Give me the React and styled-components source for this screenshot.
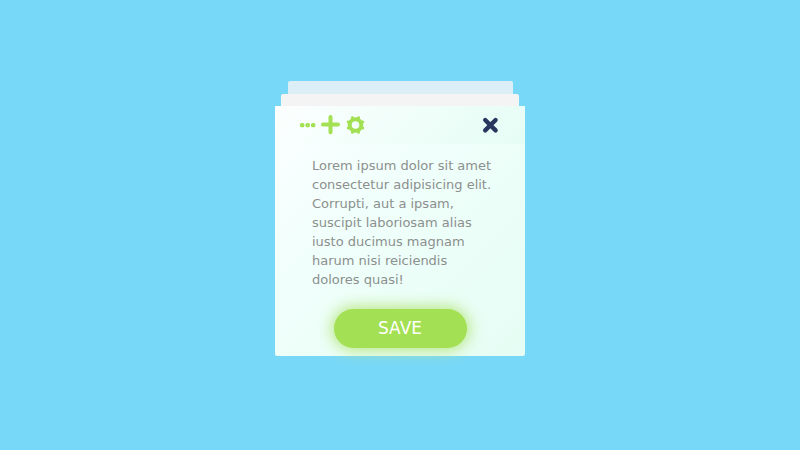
import React from "react";
import styled, { createGlobalStyle } from "styled-components";

const GlobalStyle = createGlobalStyle`
  *, *::before, *::after { box-sizing: border-box; }
  body {
    margin: 0;
    background: #78d8f8;
    font-family: "DejaVu Sans", sans-serif;
  }
`;

const Page = styled.main`
  min-height: 100vh;
  padding-bottom: 13px;
  display: flex;
  flex-direction: column;
  align-items: center;
  justify-content: center;
`;

const Stack = styled.div`
  width: 250px;
  max-width: 100%;
  display: flex;
  flex-direction: column;
  align-items: center;
`;

const Sheet = styled.div`
  width: ${(p) => p.$width};
  height: ${(p) => p.$height};
  background: ${(p) => p.$color};
  border-radius: 2px 2px 0 0;
`;

const Card = styled.article`
  width: 100%;
  border-radius: 0 0 2px 2px;
  background: linear-gradient(135deg, #fcffff, #f0fffb 40%, #e5fdf4);
`;

const Toolbar = styled.header`
  display: flex;
  align-items: center;
  justify-content: space-between;
  height: 38px;
  padding: 0 25px;
  background: linear-gradient(135deg, #fcffff, #e5fdf5);
`;

const Tools = styled.div`
  display: flex;
  gap: 5px;
`;

const IconButton = styled.button`
  display: flex;
  padding: 0;
  border: 0;
  background: none;
  color: ${(p) => p.$color};
  cursor: pointer;
`;

const Note = styled.p`
  margin: 0;
  padding: 12px 30px 0 37px;
  color: #8c8f8e;
  font-size: 13px;
  line-height: 19px;
`;

const Actions = styled.footer`
  display: flex;
  justify-content: center;
  padding: 20px 0 8px;
`;

const SaveButton = styled.button`
  width: 133px;
  height: 39px;
  padding: 0 0 2px;
  border: 0;
  border-radius: 20px;
  background: #a3e053;
  box-shadow: 0 0 15px 2px #b6e67b;
  color: #fff;
  font: 17px "DejaVu Sans", sans-serif;
  cursor: pointer;
`;

const TEETH = [0, 1, 2, 3, 4, 5, 6, 7].map((n) => n * 45 + 22.5);

export default function App() {
  return (
    <Page>
      <GlobalStyle />
      <Stack>
        <Sheet $width="90%" $height="13px" $color="#dceff6" />
        <Sheet $width="95%" $height="12px" $color="#f4f4f4" />
        <Card>
          <Toolbar>
            <Tools>
              <IconButton type="button" $color="#a3e053" aria-label="More">
                <svg width="16" height="20" viewBox="0 0 16 20" fill="currentColor">
                  <rect x="0" y="7.9" width="4.4" height="4.4" rx="1.6" />
                  <rect x="5.5" y="7.9" width="4.4" height="4.4" rx="1.6" />
                  <rect x="11" y="7.9" width="4.4" height="4.4" rx="1.6" />
                </svg>
              </IconButton>
              <IconButton type="button" $color="#a3e053" aria-label="Add">
                <svg width="19" height="20" viewBox="0 0 19 20" stroke="currentColor" strokeWidth="4" strokeLinecap="round">
                  <path d="M9.5 2v15.2M2 9.6h15" />
                </svg>
              </IconButton>
              <IconButton type="button" $color="#a3e053" aria-label="Settings">
                <svg width="20" height="20" viewBox="0 0 20 20" fill="none" stroke="currentColor">
                  <circle cx="10.5" cy="10" r="5.8" strokeWidth="4" />
                  {TEETH.map((angle) => (
                    <path
                      key={angle}
                      d="M10.5 3.6V2.1"
                      strokeWidth="3"
                      strokeLinecap="round"
                      transform={`rotate(${angle} 10.5 10)`}
                    />
                  ))}
                </svg>
              </IconButton>
            </Tools>
            <IconButton type="button" $color="#28375f" aria-label="Close">
              <svg width="18" height="20" viewBox="0 0 18 20" stroke="currentColor" strokeWidth="4.4" strokeLinecap="round">
                <path d="M3.2 5l10.4 10.4M13.6 5l-10.4 10.4" />
              </svg>
            </IconButton>
          </Toolbar>
          <Note>
            Lorem ipsum dolor sit amet consectetur adipisicing elit. Corrupti, aut a ipsam, suscipit
            laboriosam alias iusto ducimus magnam harum nisi reiciendis dolores quasi!
          </Note>
          <Actions>
            <SaveButton type="button">SAVE</SaveButton>
          </Actions>
        </Card>
      </Stack>
    </Page>
  );
}
